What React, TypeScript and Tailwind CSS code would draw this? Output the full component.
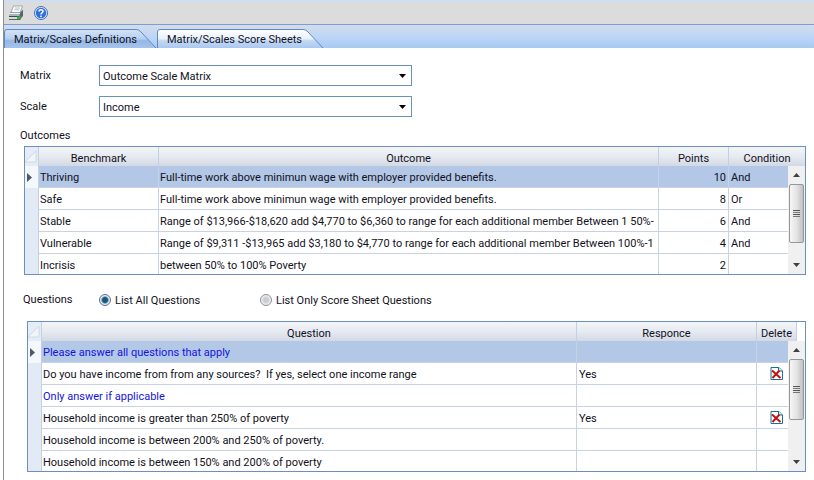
import { useState } from "react";
import type { ReactNode } from "react";

const HEADER_BG = "bg-linear-to-b from-[#f3f5f8] via-[#e6eaf1] to-[#d3d9e4]";

const outcomes = [
  { benchmark: "Thriving", outcome: "Full-time work above minimun wage with employer provided benefits.", points: 10, condition: "And" },
  { benchmark: "Safe", outcome: "Full-time work above minimun wage with employer provided benefits.", points: 8, condition: "Or" },
  { benchmark: "Stable", outcome: "Range of $13,966-$18,620 add $4,770 to $6,360 to range for each additional member Between 1 50%-", points: 6, condition: "And" },
  { benchmark: "Vulnerable", outcome: "Range of $9,311 -$13,965 add $3,180 to $4,770 to range for each additional member Between 100%-1", points: 4, condition: "And" },
  { benchmark: "Incrisis", outcome: "between 50% to 100% Poverty", points: 2, condition: "" },
];

const questions = [
  { text: "Please answer all questions that apply", heading: true, response: "" },
  { text: "Do you have income from from any sources?  If yes, select one income range", heading: false, response: "Yes" },
  { text: "Only answer if applicable", heading: true, response: "" },
  { text: "Household income is greater than 250% of poverty", heading: false, response: "Yes" },
  { text: "Household income is between 200% and 250% of poverty.", heading: false, response: "" },
  { text: "Household income is between 150% and 200% of poverty", heading: false, response: "" },
];

function PrinterIcon() {
  return (
    <svg width="16" height="16" viewBox="0 0 16 16" aria-hidden="true">
      <path d="M5.500 1h9L12 7.500H3z" fill="#fff" stroke="#8b98a2" strokeWidth="0.8" />
      <path d="M7 3h5M6.200 4.800h5" stroke="#9fb0bd" strokeWidth="0.8" />
      <path d="M1 8.500L3 6.500 3.500 7.500H12L15 4.500V11l-2.500 3.500H1z" fill="#8c979b" />
      <path d="M12 8l3-3v5.500L12 14z" fill="#59666b" />
      <path d="M1 8.500h11" stroke="#f2f5f5" />
      <path d="M1 10h10" stroke="#c9d2d4" />
      <path d="M1 11.500h10" stroke="#3e4a4f" />
      <path d="M1 13h10" stroke="#eef2f2" strokeWidth="1.500" />
      <path d="M1 14.500h11.500" stroke="#56636a" />
      <path d="M9 11.500h3.500V14H9z" fill="#2fb536" />
    </svg>
  );
}

function HelpIcon() {
  return (
    <svg width="14" height="14" viewBox="0 0 14 14" aria-hidden="true">
      <circle cx="7" cy="7" r="6.500" fill="#e4eefb" stroke="#3a6cc0" />
      <circle cx="7" cy="7" r="5.200" fill="#2f6fdb" />
      <path d="M5 5.500C5 3.200 9 3.200 9 5.400 9 6.900 7 6.700 7 8.400" fill="none" stroke="#fff" strokeWidth="1.500" />
      <circle cx="7" cy="10.300" r="0.900" fill="#fff" />
    </svg>
  );
}

function DeleteIcon() {
  return (
    <svg width="13" height="13" viewBox="0 0 13 13" aria-hidden="true">
      <path d="M1 .5h8L12.500 4v8.500H1z" fill="#fff" stroke="#1c6f9c" />
      <path d="M8.500.5V4h4" fill="#d8eef8" stroke="#1c6f9c" />
      <path d="M2 3.500l8.500 7.500M9.500 3.500L2.500 11" stroke="#c01414" strokeWidth="2" />
    </svg>
  );
}

function Tab({ label, active }: { label: string; active: boolean }) {
  const id = active ? "tab-on" : "tab-off";
  const w = active ? 167 : 153;
  return (
    <button type="button" role="tab" aria-selected={active} className="grid h-[19px] text-left">
      <svg width={w} height="19" viewBox={`0 0 ${w} 19`} className="col-start-1 row-start-1" aria-hidden="true">
        <defs>
          <linearGradient id={id} x1="0" y1="0" x2="0" y2="1">
            <stop offset="0" stopColor={active ? "#ffffff" : "#d3e3f8"} />
            <stop offset="0.500" stopColor={active ? "#e9f1fc" : "#b7d0f1"} />
            <stop offset="0.600" stopColor={active ? "#c3d9f5" : "#94b7e4"} />
            <stop offset="1" stopColor={active ? "#a9c8f0" : "#a5c4ec"} />
          </linearGradient>
        </defs>
        <path d={`M.5 19V3Q.5.500 3 .5H${w - 21}Q${w - 18} .5 ${w - 16} 3L${w - 1} 19`} fill={`url(#${id})`} stroke="#6089be" />
      </svg>
      <span className="col-start-1 row-start-1 pt-[3px] pl-[10px] leading-4 whitespace-nowrap">{label}</span>
    </button>
  );
}

function SelectField({ id, label, value }: { id: string; label: string; value: string }) {
  return (
    <div className="flex items-center">
      <label htmlFor={id} className="w-[79px] leading-4">{label}</label>
      <div className="relative h-[21px] w-[313px]">
        <select id={id} className="h-full w-full appearance-none border border-[#6d8fbe] bg-white pt-[2px] pl-[3px] leading-4">
          <option>{value}</option>
        </select>
        <svg width="7" height="4" viewBox="0 0 7 4" className="pointer-events-none absolute top-[9px] right-[6px]" aria-hidden="true">
          <path d="M0 0h7L3.500 4z" fill="#000" />
        </svg>
      </div>
    </div>
  );
}

function Radio({ label, checked, onSelect }: { label: string; checked: boolean; onSelect: () => void }) {
  return (
    <label className="flex items-center gap-1 leading-4">
      <input
        type="radio"
        name="question-filter"
        checked={checked}
        onChange={onSelect}
        className="size-3 appearance-none rounded-full border border-[#8a8f94] bg-radial from-[#c9ccd0] from-30% to-[#f4f4f4] to-70% checked:border-[#5b7288] checked:from-[#125a80] checked:from-35% checked:to-[#e6edf5] checked:to-60%"
      />
      <span className="pt-[2px]">{label}</span>
    </label>
  );
}

function Scrollbar({ thumb }: { thumb: string }) {
  return (
    <div className="absolute right-0 bottom-0 top-[19px] flex w-[17px] flex-col items-center justify-between bg-[#f0f0f0]">
      <svg width="7" height="4" viewBox="0 0 7 4" className="mt-[7px]" aria-hidden="true">
        <path d="M0 4L3.500 0 7 4z" fill="#404040" />
      </svg>
      <div className="mt-[7px] flex w-full grow flex-col px-px">
        <div className={`${thumb} flex flex-col items-center justify-center gap-px rounded-xs border border-[#979797] bg-linear-to-r from-[#f6f6f6] via-[#e4e4e4] to-[#c2c2c4]`}>
          <div className="h-px w-[7px] bg-[#555]" />
          <div className="h-px w-[7px] bg-[#777]" />
          <div className="h-px w-[7px] bg-[#555]" />
          <div className="h-px w-[7px] bg-[#777]" />
        </div>
      </div>
      <svg width="7" height="4" viewBox="0 0 7 4" className="mb-[7px]" aria-hidden="true">
        <path d="M0 0h7L3.500 4z" fill="#404040" />
      </svg>
    </div>
  );
}

function Frame({ height, thumb, children }: { height: string; thumb: string; children: ReactNode }) {
  return (
    <div className={`${height} relative overflow-hidden border border-[#6d8fbe]`}>
      {children}
      <Scrollbar thumb={thumb} />
    </div>
  );
}

function Head({ children }: { children: ReactNode }) {
  return <th className={`${HEADER_BG} border-r border-[#c3cfe2] p-0 pt-[5px] text-center leading-[14px] font-normal last:border-r-0`}>{children}</th>;
}

function CornerHead() {
  return (
    <th className="border-r border-[#c3cfe2] bg-[#e4ecf7] p-0" aria-label="Row marker">
      <svg width="12" height="12" viewBox="0 0 12 12" aria-hidden="true">
        <path d="M11 0v11H0z" fill="#f2f4f7" stroke="#cbd3df" strokeWidth="0.800" />
      </svg>
    </th>
  );
}

function RowMarker({ current }: { current: boolean }) {
  return (
    <td className={`border-r border-[#c3cfe2] p-0 ${current ? "bg-[#f4f7fb]" : "bg-[#e2eaf6]"}`}>
      {current && (
        <svg width="5" height="9" viewBox="0 0 5 9" className="ml-[2px]" aria-hidden="true">
          <path d="M0 0l5 4.500L0 9z" fill="#505a66" />
        </svg>
      )}
    </td>
  );
}

function Cell({ className = "", children }: { className?: string; children?: ReactNode }) {
  return <td className={`border-r border-b border-[#c8d2e2] leading-4 whitespace-pre ${className}`}>{children}</td>;
}

export default function App() {
  const [showAll, setShowAll] = useState(true);
  return (
    <div className="min-h-screen bg-white pl-[3px] font-[Roboto,sans-serif] text-[11px] text-[#111122]">
      <div className="flex min-h-screen flex-col border-l border-[#8c8f94]">
        <header className="flex h-[25px] items-center gap-[10px] border-t-2 border-b border-t-[#cfdef3] border-b-[#7c9dce] bg-[#dcdcdc] pl-1">
          <button type="button" aria-label="Print"><PrinterIcon /></button>
          <button type="button" aria-label="Help"><HelpIcon /></button>
        </header>
        <nav role="tablist" className="flex h-[23px] items-end bg-linear-to-b from-[#d3dcea] via-[#bdd6f7] to-[#a9c9f2]">
          <Tab label="Matrix/Scales Definitions" active={false} />
          <Tab label="Matrix/Scales Score Sheets" active />
        </nav>
        <main className="flex grow flex-col pt-[17px] pr-2 pl-4">
          <div className="flex flex-col gap-[10px]">
            <SelectField id="matrix" label="Matrix" value="Outcome Scale Matrix" />
            <SelectField id="scale" label="Scale" value="Income" />
          </div>
          <h2 className="mt-[11px] mb-[2px] leading-4">Outcomes</h2>
          <div className="pl-1">
            <Frame height="h-[129px]" thumb="h-[59px]">
              <table className="w-full table-fixed border-separate border-spacing-0">
                <colgroup>
                  <col className="w-[14px]" />
                  <col className="w-[120px]" />
                  <col />
                  <col className="w-[70px]" />
                  <col className="w-[76px]" />
                </colgroup>
                <thead>
                  <tr className="h-[19px]">
                    <CornerHead />
                    <Head>Benchmark</Head>
                    <Head>Outcome</Head>
                    <Head>Points</Head>
                    <Head>Condition</Head>
                  </tr>
                </thead>
                <tbody>
                  {outcomes.map((row, i) => (
                    <tr key={row.benchmark} className={`h-[22px] ${i === 0 ? "bg-[#b3c7e7]" : "bg-white"}`}>
                      <RowMarker current={i === 0} />
                      <Cell className="pt-[3px] pl-px">{row.benchmark}</Cell>
                      <Cell className="overflow-hidden pt-[3px] pl-px">{row.outcome}</Cell>
                      <Cell className="pt-[3px] pr-[2px] text-right">{row.points}</Cell>
                      <Cell className="pt-[3px] pl-[2px]">{row.condition}</Cell>
                    </tr>
                  ))}
                </tbody>
              </table>
            </Frame>
          </div>
          <fieldset className="mt-4 mb-3 flex items-center pl-[3px]">
            <legend className="float-left w-[76px] leading-4">Questions</legend>
            <div className="w-[161px]"><Radio label="List All Questions" checked={showAll} onSelect={() => setShowAll(true)} /></div>
            <Radio label="List Only Score Sheet Questions" checked={!showAll} onSelect={() => setShowAll(false)} />
          </fieldset>
          <div className="pl-[7px]">
            <Frame height="h-[151px]" thumb="h-[61px]">
              <table className="w-full table-fixed border-separate border-spacing-0">
                <colgroup>
                  <col className="w-[14px]" />
                  <col />
                  <col className="w-[180px]" />
                  <col className="w-[40px]" />
                  <col className="w-2" />
                </colgroup>
                <thead>
                  <tr className="h-[19px]">
                    <CornerHead />
                    <Head>Question</Head>
                    <Head>Responce</Head>
                    <Head>Delete</Head>
                    <td className="bg-white" />
                  </tr>
                </thead>
                <tbody>
                  {questions.map((row, i) => (
                    <tr key={row.text} className={`h-[22px] ${i === 0 ? "bg-[#b3c7e7]" : "bg-white"}`}>
                      <RowMarker current={i === 0} />
                      <Cell className={`pt-[3px] pl-px ${row.heading ? "text-[#1414e0]" : ""}`}>{row.text}</Cell>
                      <Cell className="pt-[3px] pl-[2px]">{row.response}</Cell>
                      <Cell>
                        {row.response && (
                          <button type="button" aria-label="Delete response" className="mx-auto block"><DeleteIcon /></button>
                        )}
                      </Cell>
                      <td />
                    </tr>
                  ))}
                </tbody>
              </table>
            </Frame>
          </div>
        </main>
      </div>
    </div>
  );
}
